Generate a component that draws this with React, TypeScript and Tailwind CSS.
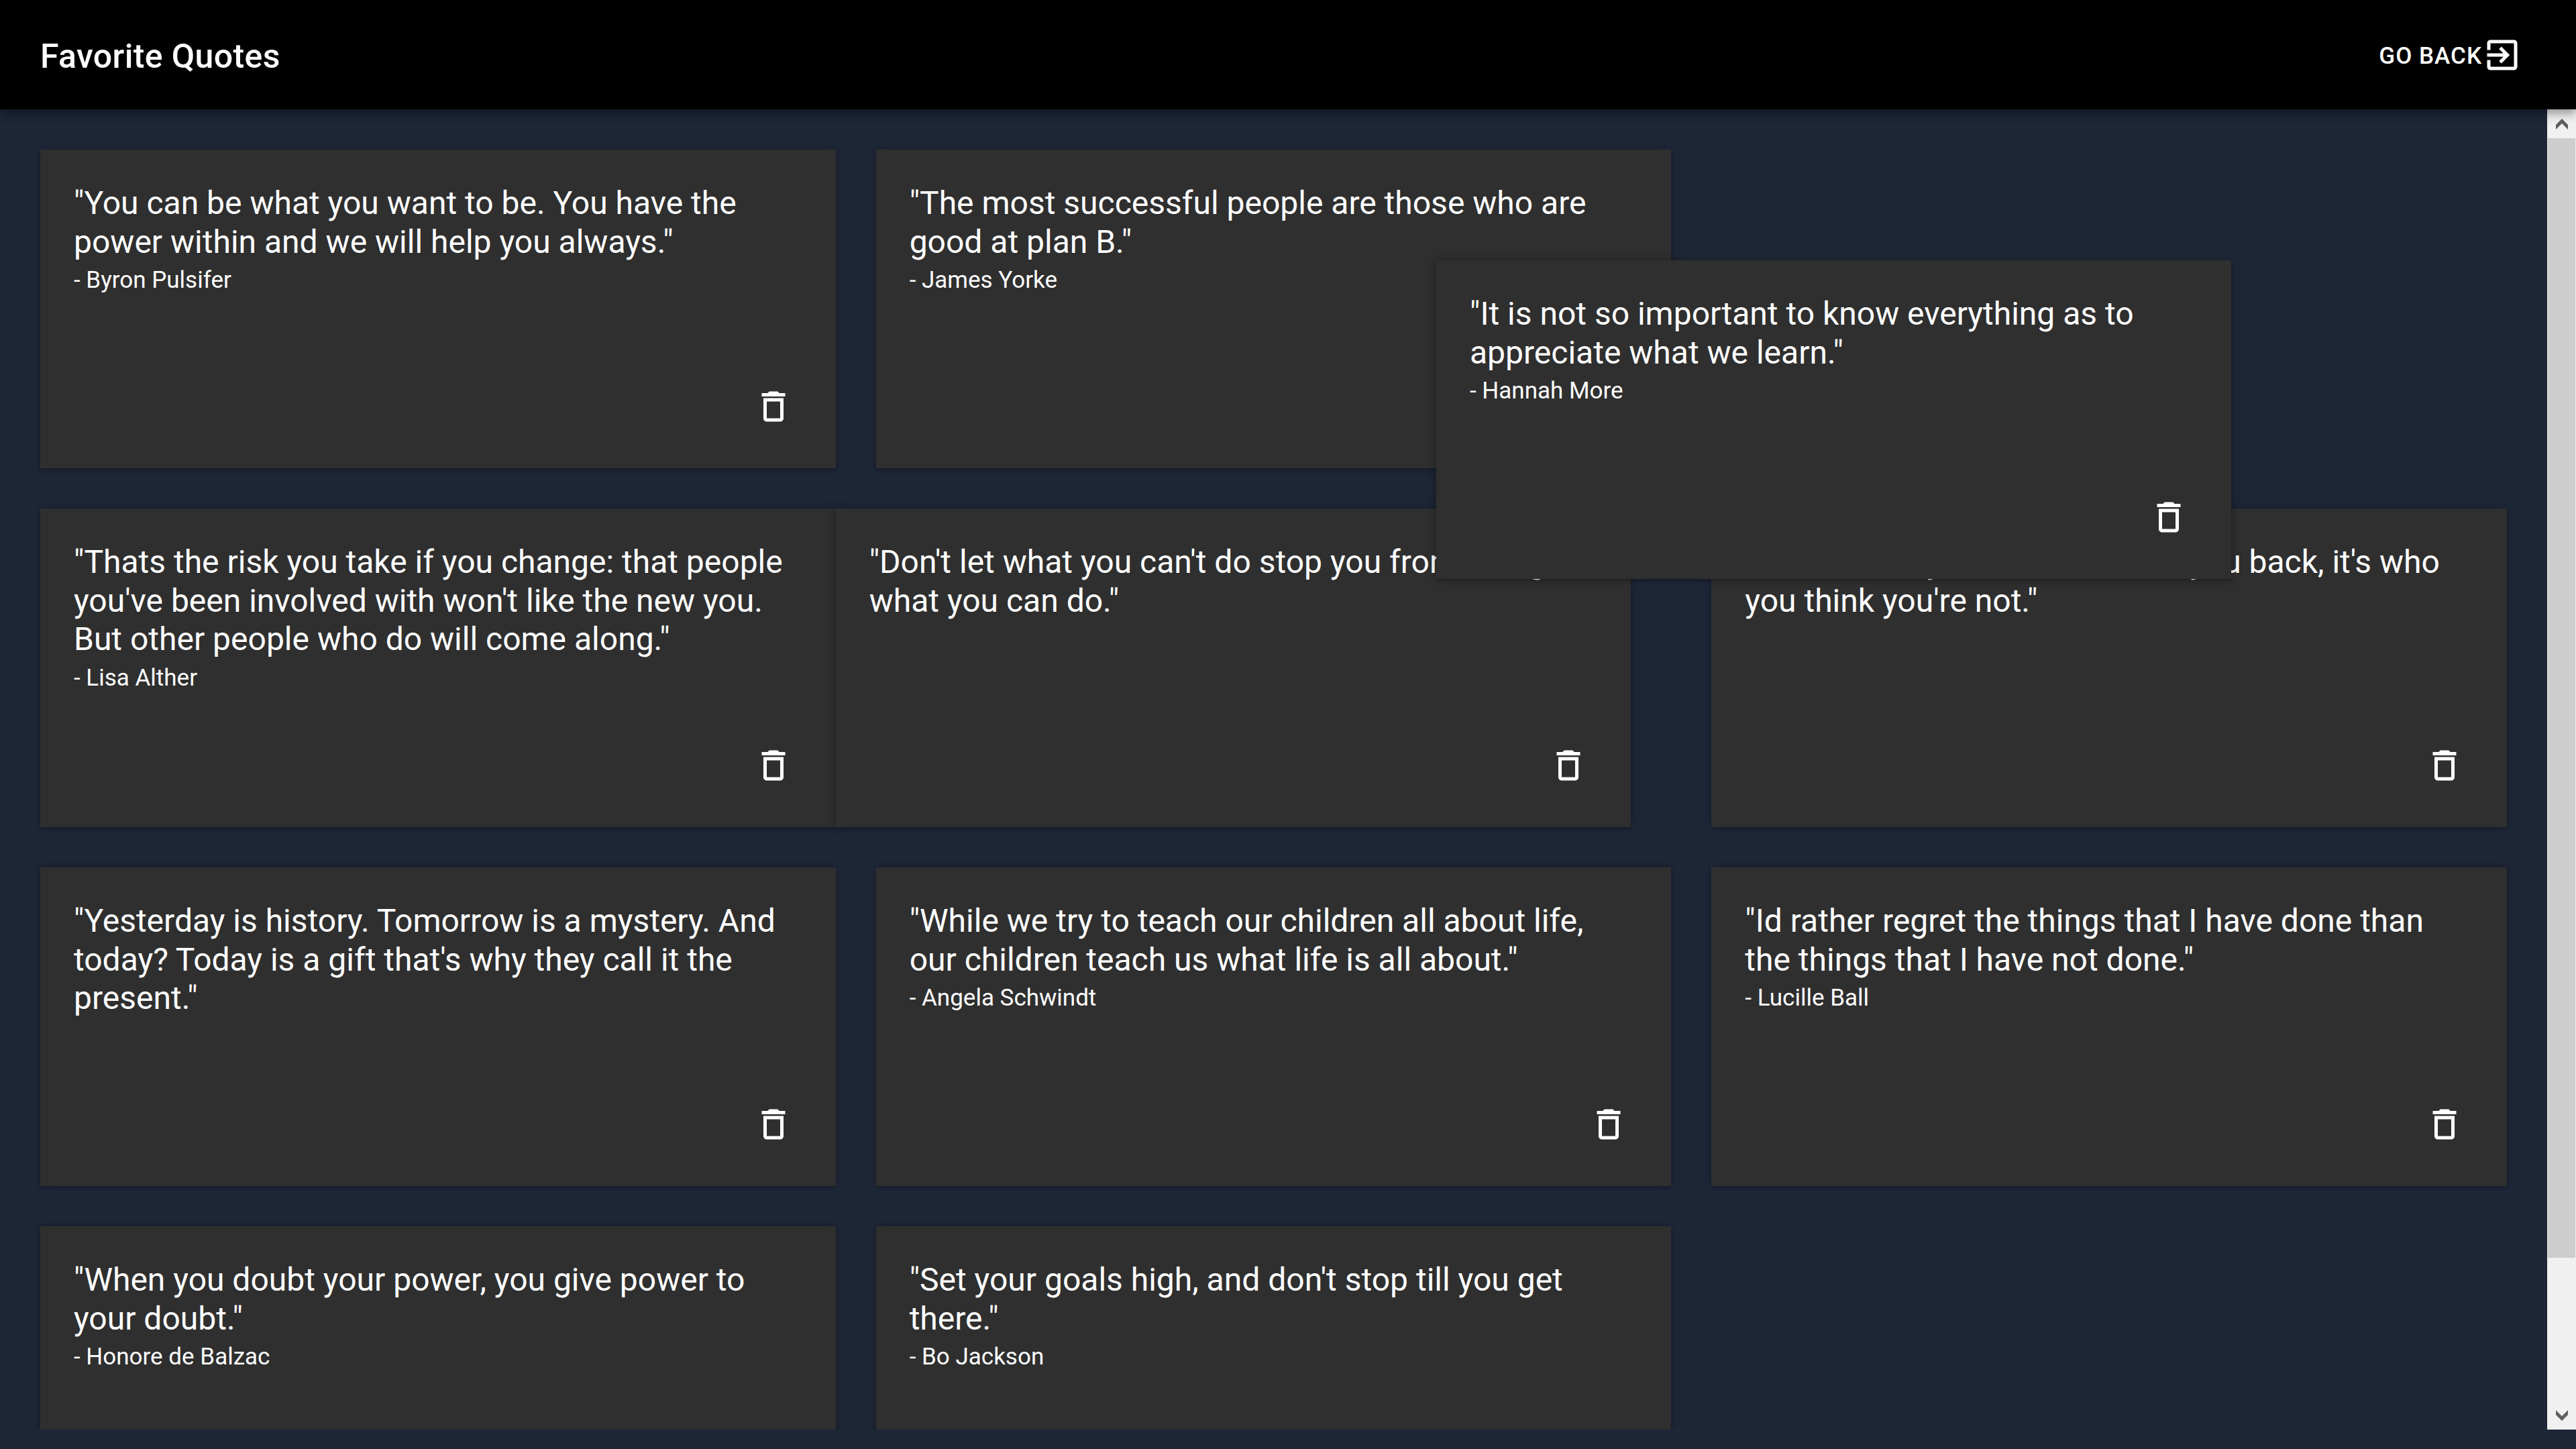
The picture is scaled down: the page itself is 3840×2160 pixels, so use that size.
const quotes = [
  { q: '"You can be what you want to be. You have the power within and we will help you always."', a: '- Byron Pulsifer' },
  { q: '"The most successful people are those who are good at plan B."', a: '- James Yorke' },
  null,
  { q: '"Thats the risk you take if you change: that people you\'ve been involved with won\'t like the new you. But other people who do will come along."', a: '- Lisa Alther' },
  { q: '"Don\'t let what you can\'t do stop you from doing what you can do."', a: '', shift: true },
  { q: '"It\'s not who you are that holds you back, it\'s who you think you\'re not."', a: '' },
  { q: '"Yesterday is history. Tomorrow is a mystery. And today? Today is a gift that\'s why they call it the present."', a: '' },
  { q: '"While we try to teach our children all about life, our children teach us what life is all about."', a: '- Angela Schwindt' },
  { q: '"Id rather regret the things that I have done than the things that I have not done."', a: '- Lucille Ball' },
  { q: '"When you doubt your power, you give power to your doubt."', a: '- Honore de Balzac' },
  { q: '"Set your goals high, and don\'t stop till you get there."', a: '- Bo Jackson' },
];

function Trash() {
  return (
    <svg viewBox="0 0 24 24" className="w-[60px] h-[60px]" fill="#fff">
      <path d="M6 19c0 1.1.9 2 2 2h8c1.1 0 2-.9 2-2V7H6v12zM8 9h8v10H8V9zm7.5-5l-1-1h-5l-1 1H5v2h14V4z" />
    </svg>
  );
}

function Card({ q, a, className = '' }: { q: string; a: string; className?: string }) {
  return (
    <div className={`h-[475px] bg-[#2f2f2f] text-white flex flex-col justify-between shadow-[0_0_14px_0_rgba(0,0,0,0.28),0_3px_4px_0_rgba(0,0,0,0.12)] ${className}`}>
      <div className="px-[50px] pt-[51px]">
        <p className="text-[48px] leading-[57.6px]">{q}</p>
        {a && <p className="text-[35px] leading-[40px] mt-[9px]">{a}</p>}
      </div>
      <div className="flex justify-end pr-[63px] pb-[62px]">
        <Trash />
      </div>
    </div>
  );
}

export default function App() {
  return (
    <div className="w-[3840px] h-[2160px] bg-[#1e2738] flex flex-col overflow-hidden font-['Roboto',sans-serif]">
      <header className="relative z-10 h-[163px] shrink-0 bg-black text-white flex items-center justify-between pl-[60px] pr-[80px] shadow-[0_5px_10px_-2px_rgba(0,0,0,0.2),0_10px_12px_0_rgba(0,0,0,0.14),0_2px_24px_0_rgba(0,0,0,0.12)]">
        <h1 className="text-[50px] font-medium leading-none tracking-[0.375px] pt-[4px]">Favorite Quotes</h1>
        <div className="flex items-center">
          <span className="text-[35px] font-medium tracking-[1px] leading-none pt-[4px]">GO BACK</span>
          <svg viewBox="0 0 24 24" className="w-[60px] h-[60px]" fill="#fff">
            <path d="M10.09 15.59L11.5 17l5-5-5-5-1.41 1.41L12.67 11H3v2h9.67l-2.58 2.59zM19 3H5c-1.11 0-2 .9-2 2v4h2V5h14v14H5v-4H3v4c0 1.1.89 2 2 2h14c1.1 0 2-.9 2-2V5c0-1.1-.9-2-2-2z" />
          </svg>
        </div>
      </header>
      <div className="h-[1968px] shrink-0 flex">
        <main className="relative flex-1 overflow-hidden pt-[60px] px-[60px]">
          <div className="grid grid-cols-3 gap-[60px]">
            {quotes.map((c, i) =>
              c ? (
                <Card key={i} q={c.q} a={c.a} className={c.shift ? 'relative z-[1] -translate-x-[60px]' : ''} />
              ) : (
                <div key={i} />
              ),
            )}
          </div>
          <Card
            q={'"It is not so important to know everything as to appreciate what we learn."'}
            a="- Hannah More"
            className="absolute z-[2] left-[2141px] top-[225px] w-[1185px]"
          />
        </main>
        <aside className="w-[43px] shrink-0 bg-[#f0f0f0] flex flex-col">
          <div className="h-[43px] flex items-center justify-center">
            <svg viewBox="0 0 18 16" className="w-[18px] h-[16px]" fill="#5f5f5f">
              <path d="M9 0L18 9V16L9 7L0 16V9Z" />
            </svg>
          </div>
          <div className="h-[1669px] mx-px bg-[#cdcdcd]" />
          <div className="flex-1 flex items-end justify-center pb-[13px]">
            <svg viewBox="0 0 18 16" className="w-[18px] h-[16px]" fill="#5f5f5f">
              <path d="M0 0L9 9L18 0V7L9 16L0 7Z" />
            </svg>
          </div>
        </aside>
      </div>
    </div>
  );
}
